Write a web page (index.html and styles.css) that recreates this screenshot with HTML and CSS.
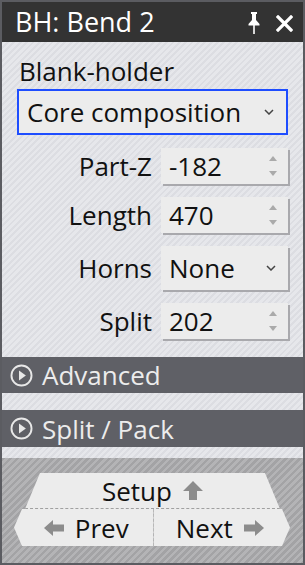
FILE: index.html
```html
<!DOCTYPE html>
<html>
<head>
<meta charset="utf-8">
<link rel="stylesheet" href="styles.css">
</head>
<body>
<div class="window">
  <div class="titlebar">
    <span class="title">BH: Bend 2</span>
    <span class="title-icons">
      <svg class="pin" width="14" height="22" viewBox="0 0 14 22"><path d="M4 0H10V2H9V8L12.5 12V13.5H1.5V12L5 8V2H4Z" fill="#fff"/><rect x="6.2" y="13" width="1.6" height="9" fill="#fff"/></svg>
      <svg class="close" width="17" height="17" viewBox="0 0 17 17"><path d="M2 2L15 15M15 2L2 15" stroke="#fff" stroke-width="3.2" stroke-linecap="square"/></svg>
    </span>
  </div>
  <div class="main">
    <div class="group-label">Blank-holder</div>
    <div class="select select-wide">
      <span class="select-text">Core composition</span>
      <svg class="chev" width="10" height="6" viewBox="0 0 10 6"><path d="M1 1L5 5L9 1" fill="none" stroke="#444" stroke-width="1.5"/></svg>
    </div>
    <div class="form">
      <label class="flabel">Part-Z</label>
      <div class="spin"><span>-182</span><span class="spin-arrows"><i class="up"></i><i class="down"></i></span></div>
      <label class="flabel">Length</label>
      <div class="spin"><span>470</span><span class="spin-arrows"><i class="up"></i><i class="down"></i></span></div>
      <label class="flabel">Horns</label>
      <div class="select select-small"><span>None</span><svg class="chev" width="10" height="6" viewBox="0 0 10 6"><path d="M1 1L5 5L9 1" fill="none" stroke="#444" stroke-width="1.5"/></svg></div>
      <label class="flabel">Split</label>
      <div class="spin"><span>202</span><span class="spin-arrows"><i class="up"></i><i class="down"></i></span></div>
    </div>
  </div>
  <div class="band">
    <svg class="play" width="23" height="23" viewBox="0 0 22 22"><circle cx="11" cy="11" r="9.6" fill="none" stroke="#e8e8e8" stroke-width="1.8"/><path d="M8.6 6.3L15.2 11L8.6 15.7Z" fill="#e8e8e8"/></svg>
    <span>Advanced</span>
  </div>
  <div class="gap gap1"></div>
  <div class="band band2">
    <svg class="play" width="23" height="23" viewBox="0 0 22 22"><circle cx="11" cy="11" r="9.6" fill="none" stroke="#e8e8e8" stroke-width="1.8"/><path d="M8.6 6.3L15.2 11L8.6 15.7Z" fill="#e8e8e8"/></svg>
    <span>Split / Pack</span>
  </div>
  <div class="gap gap2"></div>
  <div class="nav">
    <div class="btn setup">
      <span>Setup</span>
      <svg width="20" height="19" viewBox="0 0 20 19"><path d="M10 0L20 10H14V19H6V10H0Z" fill="#8c8c8c"/></svg>
    </div>
    <div class="navrow">
      <div class="btn prev">
        <svg width="20" height="16" viewBox="0 0 20 16"><path d="M0 8L9 0V4.5H20V11.5H9V16Z" fill="#8c8c8c"/></svg>
        <span>Prev</span>
      </div>
      <div class="btn next">
        <span>Next</span>
        <svg width="20" height="16" viewBox="0 0 20 16"><path d="M20 8L11 0V4.5H0V11.5H11V16Z" fill="#8c8c8c"/></svg>
      </div>
    </div>
  </div>
</div>
</body>
</html>
```

FILE: styles.css
```css
html, body {
  margin: 0;
  padding: 0;
  background: #fff;
}
.window {
  width: 305px;
  height: 565px;
  box-sizing: border-box;
  border: 2px solid #5b5c61;
  display: flex;
  flex-direction: column;
  font-family: "Open Sans", "Noto Sans", sans-serif;
  background: repeating-linear-gradient(135deg, #dcdde2 0 2px, #e6e7eb 2px 4.5px);
  overflow: hidden;
}
.titlebar {
  height: 40px;
  flex: none;
  background: #333333;
  color: #fff;
  display: flex;
  align-items: center;
  justify-content: space-between;
  padding: 0 10px 0 13px;
}
.title {
  font-size: 27px;
  line-height: 40px;
  white-space: nowrap;
}
.title-icons {
  display: flex;
  align-items: center;
  gap: 15px;
  margin-top: 2px;
}
.pin { display: block; }
.close { display: block; }
.main {
  height: 315px;
  flex: none;
  box-sizing: border-box;
  padding: 14px 15px 0 15px;
}
.group-label {
  font-size: 26px;
  line-height: 30px;
  color: #111;
  padding-left: 2px;
}
.select {
  background: #ececec;
  display: flex;
  align-items: center;
  justify-content: space-between;
  color: #111;
  box-sizing: border-box;
  white-space: nowrap;
}
.select-wide {
  margin-top: 3px;
  height: 46px;
  border: 2px solid #1e4dff;
  padding: 0 12px 0 8px;
  font-size: 26px;
}
.form {
  margin-top: 13px;
  display: grid;
  grid-template-columns: 1fr 127px;
  column-gap: 9px;
  row-gap: 13px;
  align-items: center;
}
.flabel {
  text-align: right;
  font-size: 26px;
  color: #111;
  line-height: 30px;
}
.spin {
  height: 36px;
  background: #ececec;
  box-shadow: 2px 2px 0 #a9a9ad;
  display: flex;
  align-items: center;
  justify-content: space-between;
  padding: 0 11px 0 8px;
  font-size: 26px;
  color: #111;
  box-sizing: border-box;
}
.spin-arrows {
  display: flex;
  flex-direction: column;
  gap: 10px;
}
.spin-arrows i {
  display: block;
  width: 0;
  height: 0;
  border-left: 4.5px solid transparent;
  border-right: 4.5px solid transparent;
}
.spin-arrows .up { border-bottom: 5px solid #aaaaaa; }
.spin-arrows .down { border-top: 5px solid #aaaaaa; }
.select-small {
  height: 44px;
  box-shadow: 2px 2px 0 #a9a9ad;
  padding: 0 12px 0 8px;
  font-size: 26px;
}
.band {
  height: 36px;
  flex: none;
  background: #5f6066;
  color: #ececec;
  display: flex;
  align-items: center;
  gap: 9px;
  padding-left: 8px;
  font-size: 26px;
  white-space: nowrap;
}
.band2 { height: 37px; }
.play { display: block; }
.gap1 { height: 17px; flex: none; }
.gap2 { height: 11px; flex: none; }
.nav {
  flex: 1;
  background: repeating-linear-gradient(135deg, #a3a3a5 0 2.5px, #b4b4b6 2.5px 5px);
  padding-top: 15px;
}
.btn {
  background: #ececec;
  display: flex;
  align-items: center;
  justify-content: center;
  gap: 11px;
  font-size: 26px;
  color: #111;
  box-sizing: border-box;
  white-space: nowrap;
}
.setup {
  margin-left: 23px;
  width: 255px;
  height: 36px;
  clip-path: polygon(15px 0, calc(100% - 15px) 0, 100% 100%, 0 100%);
  border-bottom: 1px dashed #a0a0a0;
}
.navrow {
  display: flex;
  margin-left: 12px;
  width: 276px;
  height: 37px;
}
.prev {
  flex: 1;
  clip-path: polygon(8px 0, 100% 0, 100% 100%, 8px 100%, 0 50%);
  border-right: 1px dashed #a0a0a0;
  padding-left: 6px;
}
.next {
  flex: 1;
  clip-path: polygon(0 0, calc(100% - 8px) 0, 100% 50%, calc(100% - 8px) 100%, 0 100%);
  padding-right: 4px;
}
```
